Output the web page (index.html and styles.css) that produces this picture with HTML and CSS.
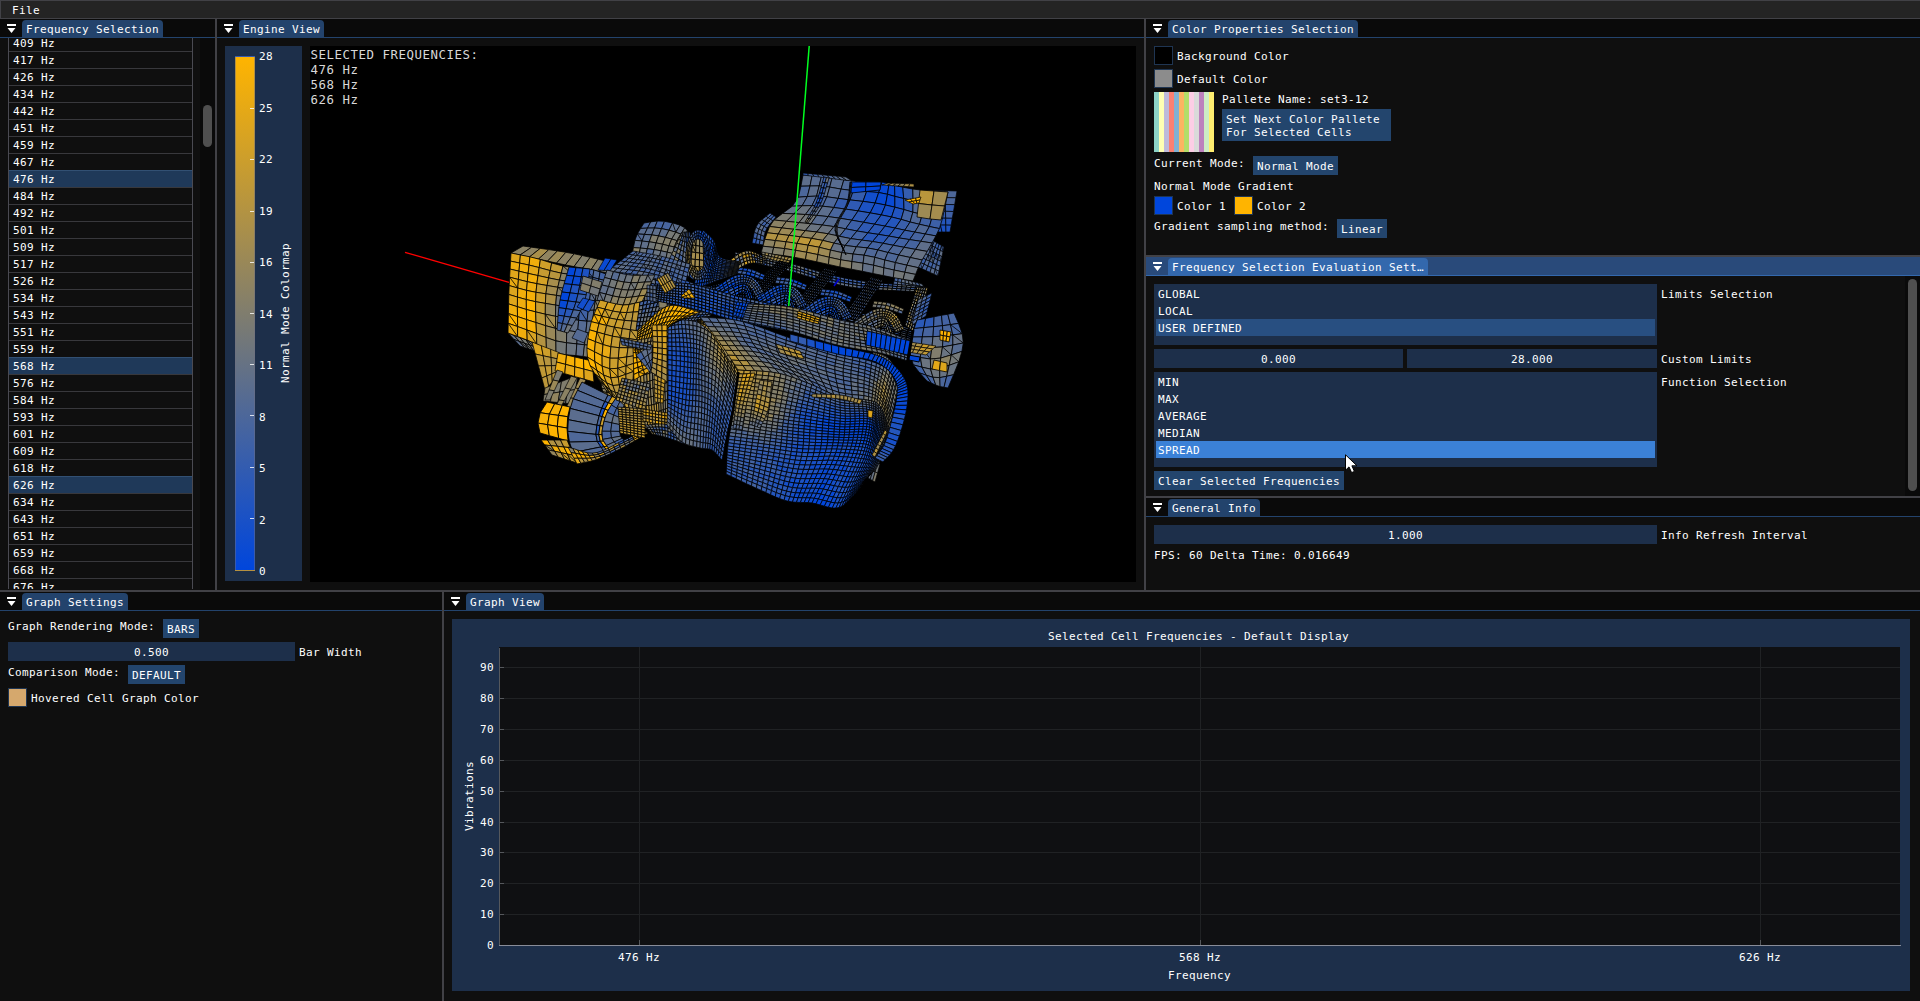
FILE: index.html
```html
<!DOCTYPE html>
<html lang="en">
<head>
<meta charset="utf-8">
<title>Engine Vibration Viewer</title>
<link rel="stylesheet" href="styles.css">
</head>
<body>
<nav class="menubar"><span>File</span></nav>
<main class="dock">
  <div class="dock-top">
    <section class="window">
      <header class="titlebar"><i class="collapse"></i><h2 class="tab">Frequency Selection</h2></header>
      <div class="freq-body">
        <ul class="freq-list">
          <li>409 Hz</li><li>417 Hz</li><li>426 Hz</li><li>434 Hz</li><li>442 Hz</li><li>451 Hz</li><li>459 Hz</li><li>467 Hz</li>
          <li class="selected">476 Hz</li><li>484 Hz</li><li>492 Hz</li><li>501 Hz</li><li>509 Hz</li><li>517 Hz</li><li>526 Hz</li><li>534 Hz</li>
          <li>543 Hz</li><li>551 Hz</li><li>559 Hz</li><li class="selected">568 Hz</li><li>576 Hz</li><li>584 Hz</li><li>593 Hz</li><li>601 Hz</li>
          <li>609 Hz</li><li>618 Hz</li><li class="selected">626 Hz</li><li>634 Hz</li><li>643 Hz</li><li>651 Hz</li><li>659 Hz</li><li>668 Hz</li><li>676 Hz</li>
        </ul>
        <div class="scrollbar"><div class="thumb thumb-freq"></div></div>
      </div>
    </section>

    <section class="window">
      <header class="titlebar"><i class="collapse"></i><h2 class="tab">Engine View</h2></header>
      <div class="engine-body">
        <div class="colormap">
          <div class="ramp"><i></i><i></i><i></i><i></i><i></i><i></i><i></i><i></i><i></i><i></i><i></i></div>
          <div class="ramp-labels"><span>28</span><span>25</span><span>22</span><span>19</span><span>16</span><span>14</span><span>11</span><span>8</span><span>5</span><span>2</span><span>0</span></div>
          <div class="ramp-title">Normal Mode Colormap</div>
        </div>
        <div class="viewport">
          <svg id="model" viewBox="310 46 826 536" width="826" height="536"></svg>
          <div class="overlay">SELECTED FREQUENCIES:<br>476 Hz<br>568 Hz<br>626 Hz</div>
        </div>
      </div>
    </section>

    <div class="side">
      <section class="window">
        <header class="titlebar"><i class="collapse"></i><h2 class="tab">Color Properties Selection</h2></header>
        <div class="form">
          <div class="row"><i class="swatch black"></i><span class="label">Background Color</span></div>
          <div class="row"><i class="swatch gray"></i><span class="label">Default Color</span></div>
          <div class="row palette-row">
            <div class="palette"></div>
            <div class="palette-info"><span class="text">Pallete Name: set3-12</span><button class="btn tall">Set Next Color Pallete<br>For Selected Cells</button></div>
          </div>
          <div class="row wide"><span class="text">Current Mode:</span><button class="btn">Normal Mode</button></div>
          <span class="text">Normal Mode Gradient</span>
          <div class="row"><i class="swatch blue"></i><span class="label">Color 1</span><i class="swatch amber second"></i><span class="label">Color 2</span></div>
          <div class="row wide"><span class="text">Gradient sampling method:</span><button class="btn">Linear</button></div>
        </div>
      </section>
      <section class="window focused">
        <header class="titlebar"><i class="collapse"></i><h2 class="tab">Frequency Selection Evaluation Sett…</h2></header>
        <div class="form scrolled">
          <div class="row"><ul class="listbox limits"><li>GLOBAL</li><li>LOCAL</li><li class="on">USER DEFINED</li></ul><span class="label">Limits Selection</span></div>
          <div class="row"><div class="pair"><div class="slider">0.000</div><div class="slider">28.000</div></div><span class="label">Custom Limits</span></div>
          <div class="row"><ul class="listbox functions"><li>MIN</li><li>MAX</li><li>AVERAGE</li><li>MEDIAN</li><li class="hot">SPREAD</li></ul><span class="label">Function Selection</span></div>
          <div class="row"><button class="btn">Clear Selected Frequencies</button></div>
          <div class="scrollbar side-scroll"><div class="thumb thumb-side"></div></div>
        </div>
      </section>
      <section class="window">
        <header class="titlebar"><i class="collapse"></i><h2 class="tab">General Info</h2></header>
        <div class="form">
          <div class="row"><div class="slider info">1.000</div><span class="label">Info Refresh Interval</span></div>
          <span class="text">FPS: 60 Delta Time: 0.016649</span>
        </div>
      </section>
    </div>
  </div>

  <div class="dock-bottom">
    <section class="window">
      <header class="titlebar"><i class="collapse"></i><h2 class="tab">Graph Settings</h2></header>
      <div class="form">
        <div class="row wide"><span class="text">Graph Rendering Mode:</span><button class="btn">BARS</button></div>
        <div class="row"><div class="slider bar-width">0.500</div><span class="label">Bar Width</span></div>
        <div class="row wide"><span class="text">Comparison Mode:</span><button class="btn">DEFAULT</button></div>
        <div class="row"><i class="swatch tan"></i><span class="label">Hovered Cell Graph Color</span></div>
      </div>
    </section>
    <section class="window">
      <header class="titlebar"><i class="collapse"></i><h2 class="tab">Graph View</h2></header>
      <div class="graph-body">
        <svg class="plot" viewBox="452 619 1458 372" width="1458" height="372">
          <rect x="499" y="647" width="1401" height="298" fill="#0f1012"/>
          <path class="grid" d="M499 667.5H1900M499 698.5H1900M499 729.5H1900M499 760.5H1900M499 791.5H1900M499 822.5H1900M499 852.5H1900M499 883.5H1900M499 914.5H1900M639.5 647V945M1200.5 647V945M1760.5 647V945"/>
          <path class="ticks" d="M499 667.5h5M499 698.5h5M499 729.5h5M499 760.5h5M499 791.5h5M499 822.5h5M499 852.5h5M499 883.5h5M499 914.5h5M639.5 940v5M1200.5 940v5M1760.5 940v5M499.5 648V945"/>
          <path class="axis" d="M499 945.5H1901"/>
          <g>
            <text x="480" y="671">90</text><text x="480" y="702">80</text><text x="480" y="733">70</text><text x="480" y="764">60</text><text x="480" y="795">50</text><text x="480" y="826">40</text><text x="480" y="856">30</text><text x="480" y="887">20</text><text x="480" y="918">10</text><text x="487" y="949">0</text>
            <text x="618" y="961">476 Hz</text><text x="1179" y="961">568 Hz</text><text x="1739" y="961">626 Hz</text>
            <text x="1048" y="640">Selected Cell Frequencies - Default Display</text>
            <text x="1168" y="979">Frequency</text>
            <text transform="translate(473 831) rotate(-90)">Vibrations</text>
          </g>
        </svg>
      </div>
    </section>
  </div>
</main>
<svg class="cursor" width="14" height="20" viewBox="0 0 14 20"><path d="M.5 .8V16.2L4 12.9 6.6 18.6 9.4 17.4 6.9 11.8H12Z" fill="#fff" stroke="#000"/></svg>
<script src="model.js"></script>
</body>
</html>
```
FILE: styles.css
```css
* { box-sizing: border-box; margin: 0; padding: 0; }
body {
  width: 1920px; height: 1001px; overflow: hidden;
  display: flex; flex-direction: column;
  background: #0f0f0f; color: #fff;
  font: 11px/15px "DejaVu Sans Mono", "Liberation Mono", monospace;
  letter-spacing: .378px; white-space: nowrap;
}
ul { list-style: none; }
i { display: block; font-style: normal; }
.menubar { height: 19px; flex: none; background: #242424; border: 1px solid #414146; border-right: 0; padding: 2px 0 0 11px; }
.dock { flex: 1; display: flex; flex-direction: column; gap: 2px; background: #414146; }
.dock-top { height: 571px; display: grid; grid-template-columns: 215px 927px 774px; gap: 2px; }
.dock-bottom { flex: 1; display: grid; grid-template-columns: 442px 1476px; gap: 2px; }
.side { display: grid; grid-template-rows: 236px 239px 92px; gap: 2px; }
.window { background: #0f0f0f; min-width: 0; min-height: 0; overflow: hidden; display: flex; flex-direction: column; }

.titlebar { height: 19px; flex: none; display: flex; background: #0a0a0a; border-bottom: 1px solid #23436c; padding: 1px 0 0 7px; }
.collapse { width: 9px; height: 9px; margin: 4px 6px 0 0; background: linear-gradient(#fff 0 2px, transparent 2px 4px, #fff 4px); clip-path: polygon(0 0, 100% 0, 100% 3px, 94% 4px, 50% 100%, 6% 4px, 0 3px); }
.tab { font: inherit; height: 17px; background: #23436c; border-radius: 4px 4px 0 0; padding: 2px 4px 0; }
.focused .titlebar { background: #294a7a; border-color: #3368ad; }
.focused .tab { background: #3368ad; }

.freq-body { flex: 1; display: flex; min-height: 0; padding-left: 8px; justify-content: space-between; }
.freq-list { width: 185px; height: 551px; overflow: hidden; border: solid #4a4a52; border-width: 0 1px; }
.freq-list li { height: 17px; padding: 1px 0 0 4px; border-bottom: 1px solid #38383c; }
.freq-list li:first-child { height: 14px; padding-top: 0; line-height: 11px; }
.freq-list .selected { background: #1f3959; box-shadow: 0 -1px #325073; }
.scrollbar { width: 15px; background: #0a0a0a; padding-left: 3px; }
.thumb { width: 9px; border-radius: 4.5px; background: #4f4f4f; }
.thumb-freq { height: 42px; margin-top: 67px; }
.thumb-side { height: 212px; margin-top: 3px; }

.engine-body { display: flex; gap: 8px; padding: 8px; }
.colormap { width: 77px; height: 535px; background: #1d2f4a; display: flex; padding-left: 10px; }
.ramp { width: 20px; height: 515px; margin-top: 10px; background: linear-gradient(#ffb400, #0046dc); border: 1px solid rgba(110,110,128,.5); display: flex; flex-direction: column; justify-content: space-between; align-items: flex-end; }
.ramp i { width: 4px; height: 1px; background: #fff; opacity: .8; }
.ramp i:first-child, .ramp i:last-child { opacity: 0; }
.ramp-labels { width: 20px; height: 530px; margin: 3px 0 0 4px; display: flex; flex-direction: column; justify-content: space-between; }
.ramp-title { writing-mode: vertical-rl; transform: rotate(180deg); height: 141px; margin: 196px 0 0 -1px; width: 15px; }
.viewport { width: 826px; height: 536px; background: #000; position: relative; }
.viewport svg { display: block; }
.overlay { position: absolute; left: .5px; top: 1px; font-size: 12.4px; letter-spacing: .54px; line-height: 15px; color: #d8d8d8; }

.form { display: flex; flex-direction: column; gap: 4px; padding: 8px; flex: 1; align-items: flex-start; }
.row { display: flex; gap: 4px; }
.row.wide { gap: 8px; }
.text { height: 13px; }
.label { margin-top: 3px; height: 15px; }
.wide { height: 19px; }
.swatch { width: 19px; height: 19px; border: 1px solid #1f3552; }
.swatch.second { margin-left: 4px; }
.black { background: #000; }
.gray { background: #8c8c8c; }
.blue { background: #0046dc; }
.amber { background: #ffb400; }
.tan { background: #d5a86d; }
.btn { font: inherit; letter-spacing: inherit; color: inherit; text-align: left; border: 0; background: #23456d; height: 19px; padding: 1px 4px 0; }
.btn.tall { width: 169px; height: 32px; line-height: 13px; padding: 2px 4px 0; }
.palette-row { gap: 8px; }
.palette-info { display: flex; flex-direction: column; gap: 4px; }
.palette { width: 60px; height: 60px; background: linear-gradient(90deg, #8dd3c7 0 5px, #ffffb3 5px 10px, #bebada 10px 15px, #fb8072 15px 20px, #80b1d3 20px 25px, #fdb462 25px 30px, #b3de69 30px 35px, #fccde5 35px 40px, #d9d9d9 40px 45px, #bc80bd 45px 50px, #ccebc5 50px 55px, #ffed6f 55px); }
.slider { height: 19px; background: #1d2f4a; text-align: center; padding-top: 3px; }
.slider.info { width: 503px; }
.slider.bar-width { width: 287px; }
.pair { width: 503px; display: grid; grid-template-columns: 249px 250px; gap: 4px; }
.listbox { width: 503px; background: #1d2f4a; padding: 1px 2px; }
.limits { height: 61px; }
.functions { height: 95px; }
.listbox li { height: 17px; padding: 2px 0 0 2px; }
.listbox .on { background: #284f81; }
.listbox .hot { background: #3b81d7; }
.scrolled { position: relative; }
.side-scroll { position: absolute; right: 0; top: 0; bottom: 0; }

.graph-body { padding: 8px; }
.plot { display: block; background: #1d2f4a; fill: #fff; }
.grid { stroke: #202224; fill: none; }
.ticks { stroke: #55585c; fill: none; }
.axis { stroke: #888c98; fill: none; }
.cursor { position: absolute; left: 1344.5px; top: 454px; }
```
FILE: model.js
```js
// Engine shell drawn as shaded quad patches. Values run 0 (blue) to 9 (amber).
const svg = document.getElementById('model');
const NS = svg.namespaceURI;
let seed = 7;
const rnd = () => (seed = (seed * 16807) % 2147483647) / 2147483647;
const mix = (a, b, t) => a + (b - a) * t;
const color = t => {
  t = Math.max(0, Math.min(1, t));
  return `rgb(${Math.round(255 * t)},${Math.round(mix(70, 180, t))},${Math.round(220 * (1 - t))})`;
};
// Smooth curve through a list of points, straight when there are only two.
function curve(p, t) {
  const n = p.length - 1, s = Math.min(t * n, n - 1e-6), i = Math.floor(s), f = s - i;
  const b = p[i], c = p[i + 1];
  const a = i > 0 ? p[i - 1] : b.map((v, k) => 2 * v - c[k]);
  const d = i + 2 <= n ? p[i + 2] : c.map((v, k) => 2 * v - b[k]);
  return b.map((v, k) => v + .5 * f * (c[k] - a[k] + f * (2 * a[k] - 5 * v + 4 * c[k] - d[k] + f * (3 * (v - c[k]) + d[k] - a[k]))));
}
const linear = (p, t) => {
  const n = p.length - 1, s = Math.min(t * n, n - 1e-6), i = Math.floor(s);
  return n ? mix(p[i], p[i + 1], s - i) : p[0];
};
function add(d, fill, w) {
  const e = document.createElementNS(NS, 'path');
  e.setAttribute('d', d); e.setAttribute('fill', fill);
  e.setAttribute('stroke', '#000'); e.setAttribute('stroke-width', w);
  svg.appendChild(e);
}
function surf(points, values, nu, nv, w = .7, noise = .14, diag = 0) {
  const rows = points.map(r => r.trim().split(' ').map(p => p.split(',').map(Number)));
  const vals = values.split(' ').map(r => [...r].map(Number));
  const at = (u, v) => curve(rows.map(r => curve(r, u)), v);
  for (let j = 0; j < nv; j++) for (let i = 0; i < nu; i++) {
    const q = [at(i / nu, j / nv), at((i + 1) / nu, j / nv), at((i + 1) / nu, (j + 1) / nv), at(i / nu, (j + 1) / nv)].map(p => p.map(c => c.toFixed(1)).join(' '));
    const t = linear(vals.map(r => linear(r, (i + .5) / nu)), (j + .5) / nv) / 9 + (rnd() - .5) * noise;
    add(`M${q.join('L')}Z` + (rnd() < diag ? `M${q[0]}L${q[2]}` : ''), color(t), w);
  }
}
function ring(cx, cy, rx, ry, k, values, n, m) {
  const pts = f => Array.from({ length: 13 }, (_, i) => {
    const a = i * Math.PI / 6;
    return `${cx + Math.cos(a) * rx * f},${cy + Math.sin(a) * ry * f}`;
  }).join(' ');
  surf([pts(1), pts(k)], values, n, m, .8);
}

// Rear cover and its side flaps
surf(['752,243 757,225 770,213', '763,245 766,230 776,217'], '232', 7, 3);
surf(['921,190 957,191', '938,232 950,232'], '33 01', 3, 6);
surf(['932,240 944,247', '918,267 938,276'], '23 33', 5, 6, .7, .14, .4);
surf(['895,277 922,284', '893,285 926,290'], '33', 8, 2);
surf(['803,175 825,176 852,181 882,182 897,186 920,190 948,192',
  '796,202 818,201 844,204 873,208 897,213 918,219 941,224',
  '774,220 803,223 830,226 857,231 882,235 906,239 932,243',
  '766,236 791,239 817,243 843,249 869,252 893,258 920,264',
  '761,253 787,256 813,261 840,267 866,272 890,277 913,281'],
  '3330045 3321132 5432123 6673334 4555444', 14, 10, .8, .08);
surf(['803,175 852,181', '803,173 846,177'], '23', 9, 1);
surf(['882,185 914,187', '888,183 914,184'], '56', 6, 1);
surf(['920,190 934,191 948,192', '917,217 930,219 941,220'], '576 565', 2, 2, .8, .2);
surf(['851,182 881,182', '851,193 880,190'], '00', 2, 2, .8, .05);
surf(['905,200 921,197', '913,204 919,203'], '99', 3, 2);
surf(['824,177 829,178', '816,203 821,203', '805,222 808,223'], '32', 2, 10, .8, .5);
surf(['850,182 852,183', '847,203 848,204', '835,227 837,229', '842,247 846,255'], '04 44', 2, 14, .8);

// Open cylinder bank
surf(['735,252 785,262 850,279 925,287', '735,259 785,270 850,287 923,292'], '4423 2334', 50, 3, .9, .25);
surf(['762,252 792,258', '762,257 788,264'], '56', 9, 2);
surf(['690,292 740,280 790,290 915,330', '700,298 740,297 792,308 912,341'], '2223', 60, 6, 1.4, .2);
[[783, 261, 758, 288], [829, 268, 804, 301], [875, 277, 850, 317]].forEach(s =>
  surf([`${s[0] - 4},${s[1]} ${s[0] + 8},${s[1] + 3}`, `${s[2] - 7},${s[3]} ${s[2] + 7},${s[3] + 3}`], '33', 7, 14, 1.1, .2));
[[745, 284, 1], [787, 294, 1], [832, 306, 1], [884, 318, 4]].forEach(([x, y, v]) => {
  surf([`${x - 30},${y + 4} ${x - 8},${y - 9} ${x + 10},${y - 5} ${x + 20},${y + 11}`,
    `${x - 26},${y + 12} ${x - 6},${y + 2} ${x + 4},${y + 2} ${x + 12},${y + 14}`], `${v}${v}${v + 2}${v + 1}`, 18, 4, .8, .25);
  surf([`${x - 22},${y + 8} ${x},${y} ${x + 8},${y + 14}`, `${x - 16},${y + 16} ${x - 2},${y + 8} ${x + 2},${y + 16}`], `${v}`, 9, 3, 1, .25);
  surf([`${x - 10},${y - 17} ${x + 5},${y - 15} ${x + 20},${y - 9}`, `${x - 12},${y - 11} ${x + 3},${y - 9} ${x + 18},${y - 4}`], `${v + 1}${v}`, 7, 2, .8, .25);
});
surf(['917,287 928,288', '905,325 915,333'], '55 44', 5, 14, 1, .3);
surf(['918,300 932,293', '912,325 926,316'], '32', 3, 6);
surf(['720,268 745,251 765,257', '725,277 748,264 765,264'], '463', 14, 4, .9, .5);

// Pulley on the right
surf(['917,320 938,316 954,313', '911,340 938,340 963,337', '912,362 935,366 960,358', '927,381 938,386 948,388'],
  '222 233 254 232', 5, 7, .8, .12, .25);
surf(['910,342 936,346', '908,352 926,355'], '67', 4, 3);
surf(['940,330 951,332', '940,340 949,342'], '99', 3, 2, .8, .05);
surf(['934,360 947,363', '932,369 947,372'], '88', 2, 1, .8, .05);
surf(['908,355 920,357', '909,360 919,362'], '0', 1, 1, 1, 0);

// Inner structure behind the housings
surf(['604,268 640,262 690,282 715,288', '606,300 645,308 680,310 715,310', '600,370 640,360 668,350 690,340', '606,405 645,428 668,425 690,420'], '3223 4432 5544 6653', 30, 28, .8, .25);

// Upper left housings
surf(['644,223 662,221 682,226 690,234', '636,237 655,239 672,243 684,246', '632,255 650,256 668,259 682,263'], '2234 3456 5343', 8, 5, .8, .14, .1);
surf(['682,232 690,232', '668,262 694,280'], '42', 6, 8, .8, .3);
surf(['703,230 714,241 720,257 740,262', '694,288 706,285 716,281 736,274'], '2114 1124', 15, 14, .8, .2);
surf(['693,238 703,240', '690,273 704,274'], '55 66', 3, 5, .9, .1, .3);
ring(698, 255, 12, 25, .65, '1235653111', 30, 3);
surf(['633,251 660,256 690,264', '608,271 650,277 684,290'], '333 332', 15, 6, .7, .14, .1);

// Far left block
surf(['508,333 532,342', '520,346 538,352'], '44 35', 4, 2, .8, .1, .3);
surf(['511,253 523,246', '561,264 570,253', '608,273 614,263'], '56 55', 1, 11, .8);
surf(['605,258 617,260', '598,270 610,271'], '0', 2, 1);
surf(['511,253 535,258 563,266 590,269 606,274', '509,290 531,296 556,300 585,305 600,305', '508,333 532,342 556,353 580,356 592,358'],
  '88632 89525 98445', 10, 9, .8, .12, .2);
surf(['569,267 590,269', '560,300 584,303', '557,330 568,333'], '01 02 25', 3, 8, .8, .1);
surf(['532,342 560,353', '545,390 556,378'], '86 66', 3, 4);
surf(['583,276 602,282', '580,290 598,296'], '54', 2, 2);
surf(['583,298 595,301', '577,307 589,312'], '1', 2, 1);
surf(['577,329 588,333', '572,338 584,343'], '3', 1, 1);
surf(['545,388 578,375', '543,401 573,404'], '54', 4, 2);
surf(['558,353 592,361', '555,371 594,382'], '99 88', 4, 2, .8, .1);
[[557, 370, 545, 400], [571, 376, 553, 412], [580, 378, 566, 408]].forEach(s =>
  surf([`${s[0]},${s[1]} ${s[0] + 6},${s[1] + 2}`, `${s[2]},${s[3]} ${s[2] + 5},${s[3]}`], '55', 1, 3));

// Centre left housing
surf(['607,270 630,275 655,275', '597,300 620,305 642,302'], '344 456', 7, 4, .8, .12, .15);
surf(['600,300 623,305 640,302', '590,327 613,333 638,337', '588,360 610,372 634,366', '606,390 618,400 632,397'],
  '877 976 987 666', 6, 11, .8, .14, .22);

// Bell housing at the bottom left
surf(['547,402 570,407', '538,418 567,422', '540,433 568,441'], '99', 3, 3, .9, .1);
surf(['541,440 567,440', '552,455 577,463'], '96 69', 4, 3, .8, .5, .4);
surf(['582,382 608,395', '571,405 600,413', '568,435 596,437', '577,463 606,452'], '3', 1, 8, .9, .06);
surf(['608,395 616,398', '600,413 606,415', '596,437 602,437', '605,453 611,451'], '3399', 2, 8, .9, .5);
surf(['616,398 624,405', '606,415 620,420', '602,437 620,435', '611,451 624,440'], '3', 2, 7);
surf(['568,447 594,453 622,441 645,430', '577,464 598,459 624,447 648,433'], '7648', 16, 3, .8, .6);
surf(['622,378 650,384', '616,400 645,410'], '44 66', 9, 7, .8, .3);
surf(['618,407 645,409', '620,433 645,438'], '66 77', 7, 11, .8, .12);
surf(['643,409 668,413', '643,421 668,426'], '77', 8, 4, .8, .3);
surf(['645,425 668,425 688,440', '652,434 668,438 690,446'], '435', 14, 4, .8, .4);

// Front panel and brackets
surf(['668,322 685,320 705,325 722,340 738,368', '668,355 688,357 702,360 720,370 736,398', '668,395 686,400 702,402 716,410 728,430', '667,425 682,442 700,448 712,450 722,460'],
  '23477 11352 11322 44322', 20, 24, .75, .08);
surf(['697,320 718,322 738,352', '698,322 712,334 730,362'], '7675', 11, 4, .8, .12);
surf(['640,302 667,296', '636,330 655,330'], '33', 7, 7, .9, .25);
surf(['658,288 667,290', '659,308 667,308'], '5', 1, 2);
surf(['638,330 668,306 700,312', '637,340 655,336 676,322'], '799 889', 15, 5, .8, .2);
surf(['652,325 667,325', '653,350 667,352', '651,372 667,382'], '78 77 66', 3, 9, .8, .14);
surf(['654,375 665,380', '655,402 663,403'], '67', 3, 6);
surf(['633,347 640,350', '634,380 650,371'], '99 98', 3, 6, .8, .1, .3);
surf(['636,355 652,345', '650,372 652,366'], '33', 3, 3);
surf(['620,338 652,345', '622,345 650,350'], '33', 8, 2);

// Manifold rail
surf(['655,284 690,284 740,297 792,308', '652,300 690,308 738,321 792,332'], '3222 3113', 38, 8, .9, .2);
surf(['647,285 656,286', '647,300 656,302'], '3', 3, 4);
surf(['657,279 668,273', '665,293 676,287'], '76', 5, 2);
surf(['681,296 689,289', '684,298 695,298'], '98', 3, 2);
surf(['737,302 752,304', '733,315 747,319'], '01', 5, 4);
surf(['748,304 790,307 840,320 873,327 912,341', '742,321 790,331 837,345 880,353 908,361'], '45443 33443', 30, 8, .8, .14);
surf(['798,311 820,318', '797,318 818,324'], '88', 5, 3, .8, .1);
surf(['867,331 911,341', '866,345 908,355'], '0', 9, 1, .8, .08);

// Oil pan: shoulder, walls and the flange around it
surf(['868,478 873,461', '875,482 880,464'], '44', 2, 3);
surf(['700,317 740,321 790,338 837,353 870,361 888,370 898,388', '720,343 752,345 790,358 835,372 868,380 883,390 893,412', '738,370 777,373 810,384 840,397 867,400 880,406 890,430'],
  '3323244 6343364 7433455', 28, 11, .75, .1);
surf(['776,344 800,351', '780,353 804,359'], '67', 4, 2, .75, .1);
surf(['738,370 777,373 810,384 840,397 867,400 880,406 890,430', '734,408 770,415 803,420 840,425 868,425 878,432 885,447', '728,445 765,450 800,455 835,455 860,457 872,460 877,467', '726,474 758,489 787,501 812,503 837,508 853,496 867,478'],
  '7533444 5510014 2211113 2210114', 38, 31, .75, .1);
surf(['743,374 755,373', '737,400 747,402', '733,428 742,430'], '87 76 33', 3, 14, .75, .1);
surf(['760,380 772,382', '755,405 768,410', '752,425 760,428'], '55 76 33', 3, 11, .75, .15);
surf(['812,394 840,395 862,400', '812,397 840,399 860,404'], '566', 12, 1, .7);
surf(['868,410 873,411', '868,417 872,418'], '8', 1, 1);
surf(['885,430 887,432', '872,455 875,457'], '6', 1, 7, .7);
surf(['873,352 888,358 902,378', '873,355 886,361 899,380'], '545', 13, 1, .7);
surf(['790,334 837,346 873,354 890,362 903,376 908,392 905,417 895,447 883,462', '790,341 837,354 870,360 887,369 896,382 897,395 893,415 885,443 875,458'],
  '2000000112', 46, 1, .8, .1);

function line(d, c, w = 1.5) {
  const e = document.createElementNS(NS, 'path');
  e.setAttribute('d', d); e.setAttribute('stroke', c); e.setAttribute('stroke-width', w); e.setAttribute('fill', 'none');
  svg.appendChild(e);
}
line('M738.5 372 733 410 726 445 725 474', '#000', 2.5);
line('M913 330 907 365', '#000', 3);
// World axes
line('M405 252.3 509 282.3', '#ff0000', 1.3);
line('M809.2 46 788.7 306', '#00ff20');
line('M834 286 839 279', '#0000d0');
```
